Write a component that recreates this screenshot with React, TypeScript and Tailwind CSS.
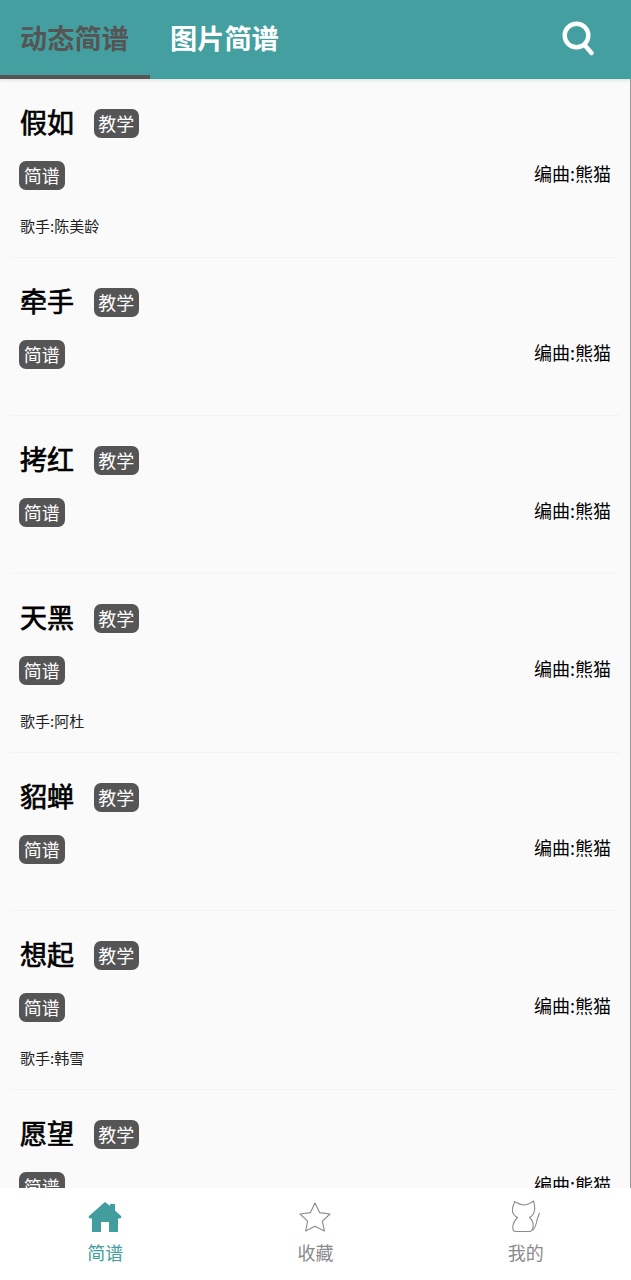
const songs = [
  { title: "假如", singer: "陈美龄" },
  { title: "牵手" },
  { title: "拷红" },
  { title: "天黑", singer: "阿杜" },
  { title: "貂蝉" },
  { title: "想起", singer: "韩雪" },
  { title: "愿望" },
];

function Tag({ text }: { text: string }) {
  return (
    <span className="flex h-[29px] w-[45.5px] items-center justify-center rounded-[7px] bg-[#555555] pb-[1px] text-[18px] leading-none text-white">
      {text}
    </span>
  );
}

function SongRow({ title, singer }: { title: string; singer?: string }) {
  return (
    <div className="mx-[10px] shrink-0 border-b border-[#f3f3f3] pt-[30px]">
      <div className="flex h-[29px] items-center gap-[19.5px] pl-[10px]">
        <span className="pb-[5px] text-[27px] leading-none font-normal text-black [-webkit-text-stroke:0.7px_black]">{title}</span>
        <Tag text="教学" />
      </div>
      <div className="mt-[23px] flex h-[29px] items-center justify-between pr-[9px] pl-[9px]">
        <Tag text="简谱" />
        <span className="pb-[5px] text-[18px] leading-none text-black">编曲:熊猫</span>
      </div>
      {singer ? (
        <div className="mt-[28px] mb-[24px] h-[15px] pl-[10px] text-[15px] leading-none text-[#222222]">
          歌手:{singer}
        </div>
      ) : (
        <div className="h-[46px]" />
      )}
    </div>
  );
}

function SearchIcon() {
  return (
    <svg width="32" height="36" viewBox="0 0 32 36" fill="none" stroke="#ffffff" strokeWidth="4.4" strokeLinecap="round">
      <circle cx="14.5" cy="14.5" r="11.8" />
      <path d="M23 24.5 L29.5 32" />
    </svg>
  );
}

function HouseIcon() {
  return (
    <svg width="34" height="30" viewBox="0 0 34 30">
      <path
        fill="#429e9e"
        d="M17 0 L22 4 V2 H27 V8.5 L33 14 C34 15.5 33 16.5 31.5 16.5 H30 V30 H21 V20 H13 V30 H4 V16.5 H2.5 C1 16.5 0 15.5 1 14 Z"
      />
    </svg>
  );
}

function StarIcon() {
  return (
    <svg width="32" height="30" viewBox="0 0 32 30" fill="none" stroke="#8a8a8a" strokeWidth="1.1" strokeLinejoin="round">
      <path d="M16 1 L20.6 10.6 L31 12 L23.4 19.2 L25.4 29 L16 24.2 L6.6 29 L8.6 19.2 L1 12 L11.4 10.6 Z" />
    </svg>
  );
}

function CatIcon() {
  return (
    <svg width="28" height="33" viewBox="0 0 28 33" fill="none" stroke="#8a8a8a" strokeWidth="1.1" strokeLinecap="round" strokeLinejoin="round">
      <path d="M2.5 1.5 C6 3.5 9 5 12 5 C15 5 18 3.5 21.5 1 C22.5 4 23 8 22.5 10.5 C22 14 20 16 17.5 17.5 C20 19.5 21.5 23 21 27 C20.8 30 20 31.5 17 31.5 H4 C1.5 31.5 0.6 30 0.8 27 C1 23 3 20 5.5 17.5 C2.5 16 0.5 13 0.3 10 C0.2 7 2 5 2.5 1.5 Z" />
      <path d="M21 30 C23.5 27 24.5 23 25 20 C25.5 17.5 27 16 27.3 13" />
    </svg>
  );
}

export default function App() {
  return (
    <main className="flex h-[1280px] w-[631px] flex-col overflow-hidden bg-white font-['Noto_Sans_CJK_SC','Noto_Sans',sans-serif]">
      <header className="relative z-10 flex h-[79px] shrink-0 items-start bg-[#44a0a0] shadow-[0_1px_4px_rgba(0,0,0,0.12)]">
        <div className="flex h-[79px] w-[150px] items-center border-b-4 border-[#555555] pl-[20px] text-[27.2px] leading-none font-bold text-[#555555]">
          动态简谱
        </div>
        <div className="flex h-[79px] items-center pb-[4px] pl-[20px] text-[27.2px] leading-none font-bold text-white">
          图片简谱
        </div>
        <div className="mt-[21px] mr-[37px] ml-auto">
          <SearchIcon />
        </div>
      </header>
      <div className="flex min-h-0 flex-1 flex-col overflow-hidden border-r border-[#9a9a9a] bg-[#fafafa]">
        {songs.map((song) => (
          <SongRow key={song.title} title={song.title} singer={song.singer} />
        ))}
      </div>
      <nav className="grid h-[92px] shrink-0 grid-cols-3 bg-white pt-[12px] text-[18px] leading-none text-[#8a8a8a]">
        <div className="flex flex-col items-center text-[#429e9e]">
          <div className="flex h-[33px] items-center">
            <HouseIcon />
          </div>
          <span className="mt-[10px]">简谱</span>
        </div>
        <div className="flex flex-col items-center">
          <div className="flex h-[33px] items-center">
            <StarIcon />
          </div>
          <span className="mt-[10px]">收藏</span>
        </div>
        <div className="flex flex-col items-center">
          <div className="flex h-[33px] items-center">
            <CatIcon />
          </div>
          <span className="mt-[10px]">我的</span>
        </div>
      </nav>
    </main>
  );
}
